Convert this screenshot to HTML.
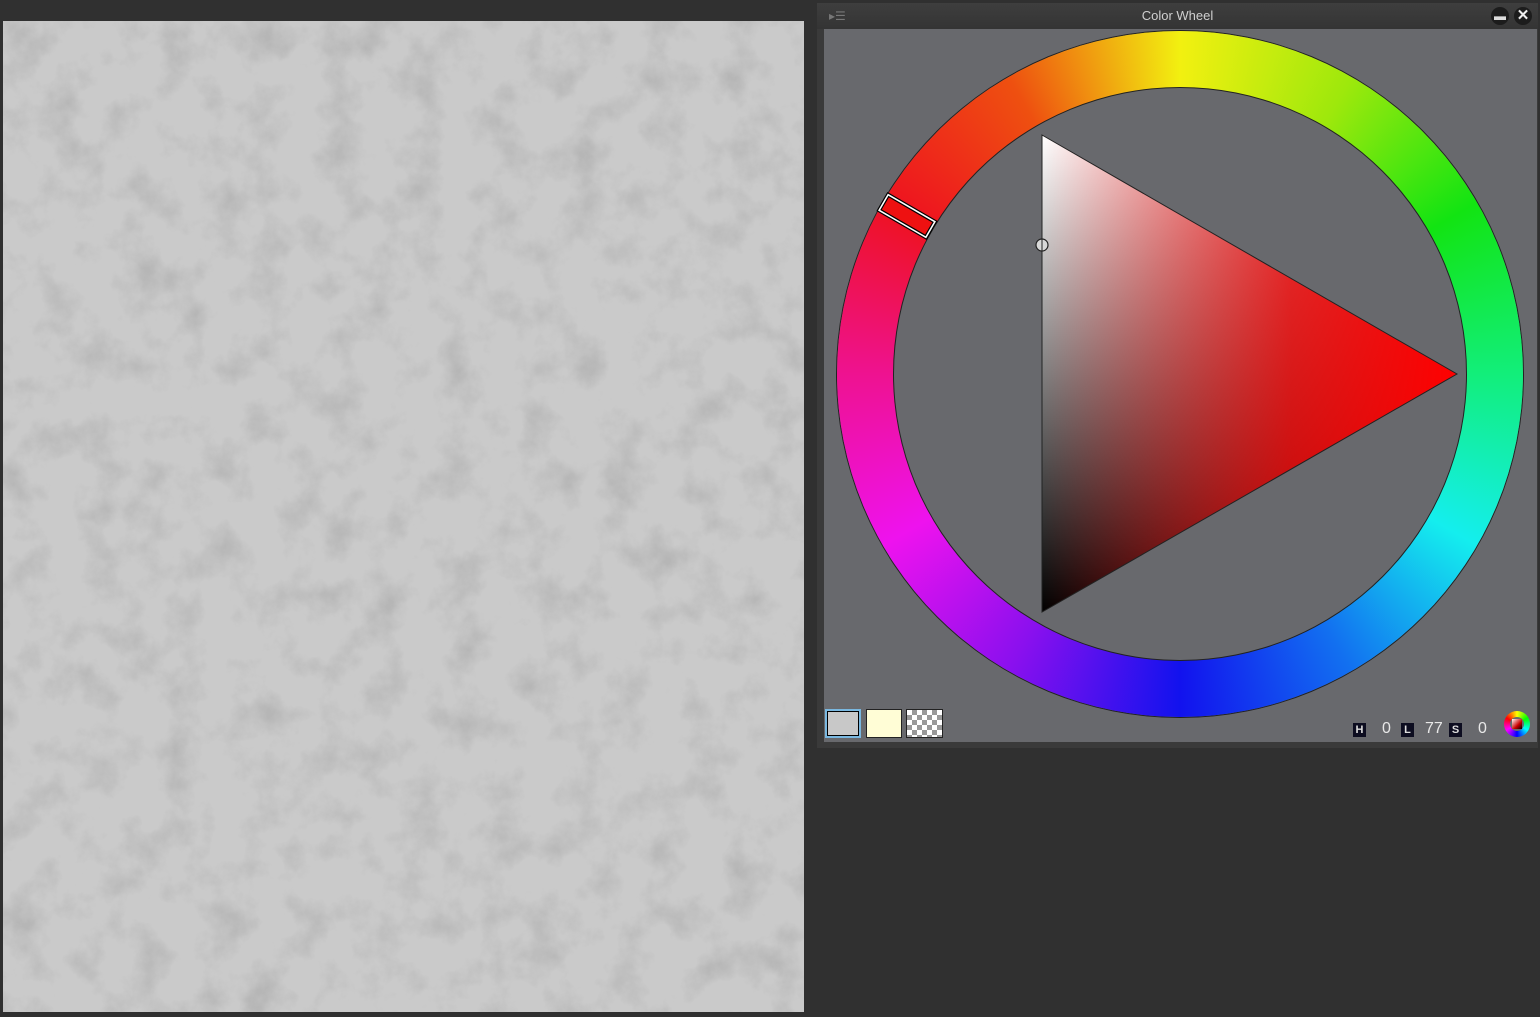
<!DOCTYPE html>
<html><head><meta charset="utf-8"><style>
body{margin:0;width:1540px;height:1012px;background:#303030;position:relative;overflow:hidden;font-family:"Liberation Sans",sans-serif}
#canvas{position:absolute;left:3px;top:21px;width:801px;height:991px;background:#c9c9c9}
#panel{position:absolute;left:817px;top:3px;width:721px;height:745px;background:#3a3a3a;border-radius:3px 3px 0 0}
#title{position:absolute;left:0;top:0;width:721px;height:26px;background:linear-gradient(#3e3e3e,#343434);color:#cfcfcf;font-size:13px;text-align:center;line-height:26px}
#content{position:absolute;width:713px;height:713px;background:#68696d}
.sw{position:absolute;top:709px;width:36px;height:29px;box-sizing:border-box;border:1px solid #222}
.lbl{position:absolute;top:723px;width:13px;height:14px;background:#0d0d20;color:#ddd;font-size:11px;line-height:14px;text-align:center;font-weight:bold}
.num{position:absolute;top:720px;color:#e8e8e8;font-size:16px}
</style></head><body>
<div id="canvas"><svg width="801" height="991"><filter id="n"><feTurbulence type="fractalNoise" baseFrequency="0.025" numOctaves="6" seed="4"/><feColorMatrix type="matrix" values="0 0 0 0 0.35 0 0 0 0 0.35 0 0 0 0 0.35 0 0 0 -2.4 1.3"/></filter><rect width="801" height="991" fill="#cacaca"/><rect width="801" height="991" filter="url(#n)" opacity="0.45"/></svg></div>
<div id="panel">
<div id="title"><span style="position:absolute;left:12px;top:0;color:#777;font-size:12px">▸☰</span>Color Wheel
<span style="position:absolute;left:674px;top:4px;width:18px;height:18px;border-radius:50%;background:#1c1c1c;color:#ddd;font-size:12px;line-height:18px">▬</span>
<span style="position:absolute;left:697px;top:4px;width:18px;height:18px;border-radius:50%;background:#1c1c1c;color:#eee;font-size:15px;line-height:18px;font-weight:bold">✕</span></div>
</div>
<div id="content" style="left:824px;top:29px"></div>
<div style="position:absolute;left:837px;top:31px;width:686px;height:686px;border-radius:50%;background:conic-gradient(#f2f010 0deg,#9ee80c 30deg,#12e412 60deg,#12ee7a 90deg,#14eeee 120deg,#1270f0 150deg,#1212ee 180deg,#8a10ee 210deg,#ee12ee 240deg,#ee1290 270deg,#ee1220 300deg,#ee5010 330deg,#f2f010 360deg);box-shadow:0 0 0 1px #222"></div>
<div style="position:absolute;left:894px;top:88px;width:572px;height:572px;border-radius:50%;background:#68696d;box-shadow:0 0 0 1px #222"></div>
<svg style="position:absolute;left:0;top:0" width="1540" height="1012">
<defs>
<linearGradient id="v" x1="0" y1="135" x2="0" y2="612" gradientUnits="userSpaceOnUse"><stop offset="0" stop-color="#fff"/><stop offset="1" stop-color="#000"/></linearGradient>
<linearGradient id="r" x1="1042" y1="0" x2="1457" y2="0" gradientUnits="userSpaceOnUse"><stop offset="0" stop-color="#f00" stop-opacity="0"/><stop offset="0.6" stop-color="#e00" stop-opacity="0.8"/><stop offset="1" stop-color="#f00" stop-opacity="1"/></linearGradient>
</defs>
<polygon points="1042,135 1457,374 1042,612" fill="url(#v)"/>
<polygon points="1042,135 1457,374 1042,612" fill="url(#r)"/>
<polygon points="1042,135 1457,374 1042,612" fill="none" stroke="#222" stroke-width="1"/>
<g transform="translate(907,216) rotate(30)"><rect x="-27" y="-9" width="54" height="18" fill="#ee1111" stroke="#000" stroke-width="4"/><rect x="-27" y="-9" width="54" height="18" fill="none" stroke="#fff" stroke-width="1.6"/></g>
<circle cx="1042" cy="245" r="6" fill="#d8d8d8" stroke="#222" stroke-width="1.2"/><line x1="1042" y1="239" x2="1042" y2="251" stroke="#222"/>
</svg>
<div class="sw" style="left:825px;background:#c8c8c8;border:2px solid #7ab8e0;box-shadow:inset 0 0 0 1px #000"></div>
<div class="sw" style="left:866px;background:#fffdd6"></div>
<div class="sw" style="left:906px;width:37px;background-color:#fff;background-image:linear-gradient(45deg,#999 25%,transparent 25%,transparent 75%,#999 75%),linear-gradient(45deg,#999 25%,transparent 25%,transparent 75%,#999 75%);background-size:10px 10px;background-position:0 0,5px 5px"></div>
<div class="lbl" style="left:1353px">H</div><div class="num" style="left:1382px">0</div>
<div class="lbl" style="left:1401px">L</div><div class="num" style="left:1425px">77</div>
<div class="lbl" style="left:1449px">S</div><div class="num" style="left:1478px">0</div>
<div style="position:absolute;left:1504px;top:711px;width:26px;height:26px;border-radius:50%;background:conic-gradient(#ff0,#0f0,#0ff,#00f,#f0f,#f00,#ff0)"></div>
<div style="position:absolute;left:1510px;top:717px;width:14px;height:14px;border-radius:50%;background:#68696d"></div>
<div style="position:absolute;left:1512px;top:719px;width:10px;height:10px;background:linear-gradient(135deg,#fff,#c00 60%,#000)"></div>
</body></html>
